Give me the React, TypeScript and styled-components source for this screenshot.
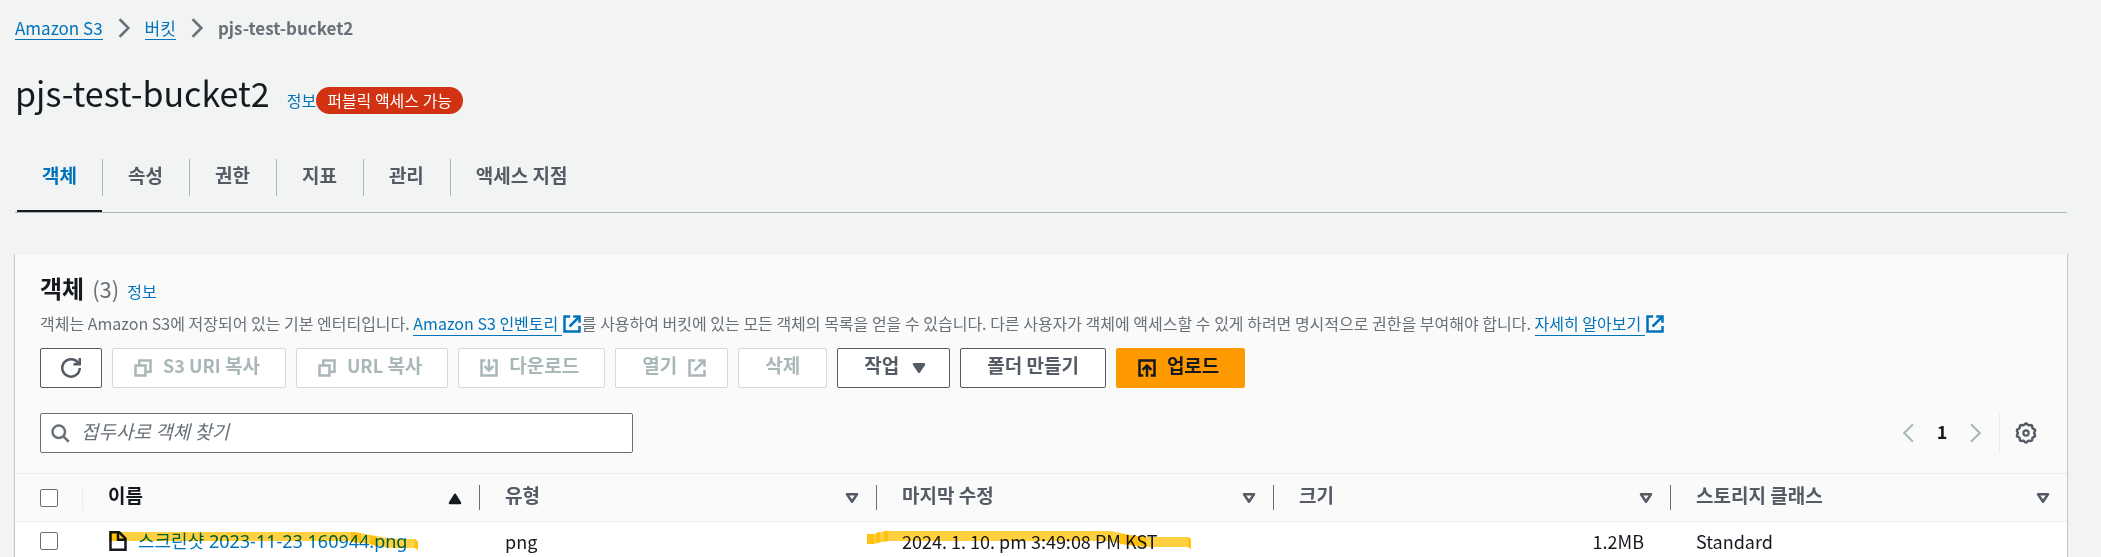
import React from "react";
import styled, { createGlobalStyle, css } from "styled-components";

const color = {
  page: "#f2f3f3",
  panel: "#fafafa",
  white: "#ffffff",
  text: "#16191f",
  label: "#545b64",
  muted: "#687078",
  link: "#0073bb",
  disabled: "#aab7b8",
  disabledBorder: "#d5dbdb",
  rule: "#eaeded",
  danger: "#d13212",
  primary: "#ff9900",
};

const GlobalStyle = createGlobalStyle`
  *, *::before, *::after { box-sizing: border-box; }
  body {
    margin: 0;
    background: ${color.page};
    color: ${color.text};
    font-family: "Noto Sans CJK KR", "Noto Sans", sans-serif;
    font-size: 18px;
    line-height: 26px;
  }
  button, input { font: inherit; color: inherit; }
`;

const Page = styled.main`
  height: 100vh;
  overflow: hidden;
  padding: 16px 34px 0 15px;
`;

/* ---------- links and icons ---------- */

const Link = styled.a<{ $underline?: boolean }>`
  color: ${color.link};
  text-decoration: none;
  ${(p) => p.$underline && css`border-bottom: 1px solid ${color.link};`}
`;

const InfoLink = styled(Link)`
  font-size: 16px;
  font-weight: 400;
`;

const FileLink = styled(Link)`
  font-family: "Noto Sans", "Noto Sans CJK KR", sans-serif;
`;

const Svg = styled.svg<{ $size?: number }>`
  display: block;
  flex: none;
  width: ${(p) => p.$size ?? 20}px;
  height: ${(p) => p.$size ?? 20}px;
  fill: none;
  stroke: currentColor;
  stroke-width: 2;
`;

type IconName =
  | "refresh" | "copy" | "download" | "upload" | "external" | "search"
  | "file" | "gear" | "right" | "pageLeft" | "pageRight"
  | "caretDown" | "sortUp" | "sortNone";

/* Scalloped outline of the settings gear, ten soft teeth round the centre. */
const gearOutline = Array.from({ length: 120 }, (_, i) => {
  const a = (i / 120) * Math.PI * 2;
  const r = 6.4 + 0.5 * Math.cos(10 * a);
  return `${(8 + r * Math.sin(a)).toFixed(2)} ${(8 - r * Math.cos(a)).toFixed(2)}`;
}).join("L");

const shapes: Record<IconName, React.ReactNode> = {
  refresh: (
    <>
      <path d="M10 5h5V0" />
      <path d="M15 8a7 7 0 1 1-1.2-4" />
    </>
  ),
  copy: (
    <>
      <path d="M2 6h8v8H2z" />
      <path d="M5 5.500V2h9v9h-3.500" />
    </>
  ),
  download: (
    <>
      <path d="M5 2H2v12h12V2h-3" />
      <path d="M8 1v9" />
      <path d="M4.500 6.500 8 10l3.500-3.500" />
    </>
  ),
  upload: (
    <>
      <path d="M5 14H2V2h12v12h-3" />
      <path d="M8 15V6.500" />
      <path d="M4.500 9.500 8 6l3.500 3.500" />
    </>
  ),
  external: (
    <>
      <path d="M14 9.500V14H2V2h4.500" />
      <path d="M9 2h5v5" />
      <path d="M6 10l7.500-7.500" />
    </>
  ),
  search: (
    <>
      <circle cx="7" cy="7" r="5" />
      <path d="m10.500 10.500 4.500 4.500" />
    </>
  ),
  file: (
    <>
      <path d="M2 1h7l5 5v9H2z" />
      <path d="M8 1v6h6" />
    </>
  ),
  gear: (
    <>
      <path d={`M${gearOutline}z`} strokeWidth="1.8" />
      <circle cx="8" cy="8" r="1.900" strokeWidth="1.600" />
    </>
  ),
  right: <path d="m4.500 1 7 7-7 7" />,
  pageLeft: <path d="M12 1 5 8l7 7" strokeWidth="1.700" />,
  pageRight: <path d="m4 1 7 7-7 7" strokeWidth="1.700" />,
  caretDown: <path d="M4 5h8l-4 6z" fill="currentColor" strokeLinejoin="round" />,
  sortUp: <path d="M4 12h8L8 5.500z" fill="currentColor" strokeLinejoin="round" />,
  sortNone: <path d="M4 5h8l-4 6z" strokeLinejoin="round" />,
};

function Icon({ name, size }: { name: IconName; size?: number }) {
  return (
    <Svg viewBox="0 0 16 16" $size={size} aria-hidden="true">
      {shapes[name]}
    </Svg>
  );
}

/* ---------- page header ---------- */

const Breadcrumbs = styled.nav`
  display: flex;
  align-items: center;
  gap: 11px;
  height: 24px;
  color: ${color.muted};
  font-size: 17px;
  line-height: 22px;
`;

const Current = styled.span`
  font-weight: 700;
`;

const TitleRow = styled.header`
  display: flex;
  align-items: baseline;
  margin-top: 30px;
`;

const Title = styled.h1`
  margin: 0 17px 0 0;
  font-size: 34px;
  line-height: 46px;
  font-weight: 400;
`;

const Badge = styled.span`
  padding: 0 11px;
  border-radius: 14px;
  background: ${color.danger};
  color: ${color.white};
  font-size: 16px;
  line-height: 27px;
`;

const Tabs = styled.div`
  display: flex;
  margin-top: 36px;
  padding-left: 2px;
  border-bottom: 1px solid ${color.disabled};
`;

const TabLabel = styled.span`
  display: block;
  padding: 3px 25px 8px;
`;

const Tab = styled.button<{ $active?: boolean }>`
  padding: 7px 0 16px;
  border: 0;
  background: none;
  color: ${(p) => (p.$active ? color.link : color.label)};
  font-size: 19px;
  font-weight: 700;
  cursor: pointer;
  ${(p) => p.$active && css`box-shadow: inset 0 -2px ${color.text};`}

  &:not(:first-child) ${TabLabel} {
    padding-right: 26px;
    border-left: 1px solid ${color.disabled};
  }
`;

/* ---------- objects panel ---------- */

const Panel = styled.section`
  margin-top: 40px;
  border-top: 1px solid ${color.rule};
  background: ${color.panel};
  box-shadow:
    0 1px 1px rgba(0, 28, 36, 0.3),
    1px 1px 1px rgba(0, 28, 36, 0.15),
    -1px 1px 1px rgba(0, 28, 36, 0.15);
`;

const PanelHead = styled.div`
  padding: 18px 25px 20px;
`;

const Heading = styled.h2`
  display: flex;
  align-items: baseline;
  gap: 8px;
  margin: 0;
  font-size: 24px;
  line-height: 32px;
  font-weight: 700;
`;

const Count = styled.span`
  color: ${color.muted};
  font-size: 22px;
  font-weight: 400;
`;

const Description = styled.p`
  margin: 3px 0 0;
  color: ${color.muted};
  font-size: 16px;
  line-height: 26px;

  svg {
    display: inline-block;
    vertical-align: -4px;
    color: ${color.link};
  }
`;

const Toolbar = styled.div`
  display: flex;
  flex-wrap: wrap;
  gap: 10px;
  margin-top: 12px;
`;

const buttonPadding = {
  none: "0 26px",
  start: "0 25px 0 20px",
  end: "0 20px 0 26px",
  only: "0 20px",
};

const Button = styled.button<{ $primary?: boolean; $icon?: keyof typeof buttonPadding }>`
  display: flex;
  align-items: center;
  gap: 10px;
  height: 40px;
  padding: ${(p) => buttonPadding[p.$icon ?? "none"]};
  border: 1px solid ${(p) => (p.$primary ? color.primary : color.label)};
  border-radius: 2px;
  background: ${(p) => (p.$primary ? color.primary : color.white)};
  color: ${(p) => (p.$primary ? color.text : color.label)};
  font-size: 19px;
  font-weight: 700;
  white-space: nowrap;
  cursor: pointer;

  &:disabled {
    border-color: ${color.disabledBorder};
    color: ${color.disabled};
    cursor: default;
  }
  & > span {
    padding-bottom: 6px;
  }
`;

const Latin = styled.span`
  font-size: 18px;
`;

const FilterRow = styled.div`
  display: flex;
  justify-content: space-between;
  align-items: center;
  margin-top: 25px;
`;

const SearchBox = styled.label`
  display: flex;
  align-items: center;
  gap: 11px;
  flex: 0 1 593px;
  height: 40px;
  padding: 0 10px 0 9px;
  border: 1px solid ${color.muted};
  border-radius: 2px;
  background: ${color.white};
  color: ${color.muted};
`;

const SearchInput = styled.input`
  flex: 1;
  min-width: 0;
  padding: 0 0 4px;
  border: 0;
  outline: 0;
  background: none;
  font-size: 19px;

  &::placeholder {
    color: ${color.muted};
    font-style: italic;
    opacity: 1;
  }
`;

const Pagination = styled.div`
  display: flex;
  align-items: center;
  height: 40px;
  padding-right: 5px;
`;

const IconButton = styled.button<{ $strong?: boolean }>`
  padding: 0;
  border: 0;
  background: none;
  color: ${(p) => (p.$strong ? color.label : color.disabled)};
  cursor: pointer;
`;

const PageNumber = styled.button`
  width: 48px;
  padding: 0 0 4px;
  border: 0;
  background: none;
  font-weight: 700;
`;

const Separator = styled.span`
  width: 1px;
  height: 100%;
  margin: 0 15px 0 13px;
  background: ${color.rule};
`;

/* ---------- table ---------- */

const Table = styled.table`
  width: 100%;
  table-layout: fixed;
  border-collapse: collapse;
  text-align: left;
`;

const SelectCol = styled.col`
  width: 67px;
`;

const HeadCell = styled.th`
  height: 48px;
  padding: 0;
  border: 1px solid ${color.rule};
  border-width: 1px 0;
  color: ${color.label};
  font-size: 19px;
`;

const HeadInner = styled.div<{ $first?: boolean; $sorted?: boolean }>`
  display: flex;
  align-items: center;
  justify-content: space-between;
  height: 25px;
  padding: 0 14px 0 25px;
  border-left: 1px solid ${(p) => (p.$first ? color.rule : color.muted)};
  ${(p) => p.$sorted && css`color: ${color.text};`}

  & > span {
    padding-bottom: 6px;
  }
`;

const SelectCell = styled.td`
  padding: 0 0 0 25px;
  line-height: 0;
`;

const Checkbox = styled.input`
  appearance: none;
  width: 18px;
  height: 18px;
  margin: 0;
  border: 1px solid ${color.muted};
  border-radius: 2px;
  background: ${color.white};
`;

const Row = styled.tr`
  height: 39px;
  background: ${color.white};
`;

const Cell = styled.td<{ $end?: boolean }>`
  padding: 0 26px;
  white-space: nowrap;
  text-align: ${(p) => (p.$end ? "right" : "left")};
`;

const FileName = styled.span`
  display: flex;
  align-items: center;
  gap: 10px;
`;

const Marked = styled.div`
  position: relative;
`;

const Marker = styled.svg<{ $left: number }>`
  position: absolute;
  top: 0;
  left: ${(p) => p.$left}px;
  mix-blend-mode: multiply;
  pointer-events: none;
`;

const columns: { label: string; icon: IconName }[] = [
  { label: "이름", icon: "sortUp" },
  { label: "유형", icon: "sortNone" },
  { label: "마지막 수정", icon: "sortNone" },
  { label: "크기", icon: "sortNone" },
  { label: "스토리지 클래스", icon: "sortNone" },
];

const tabs = ["객체", "속성", "권한", "지표", "관리", "액세스 지점"];

export default function App() {
  return (
    <>
      <GlobalStyle />
      <Page>
        <Breadcrumbs aria-label="breadcrumb">
          <Link href="#" $underline>Amazon S3</Link>
          <Icon name="right" />
          <Link href="#" $underline>버킷</Link>
          <Icon name="right" />
          <Current>pjs-test-bucket2</Current>
        </Breadcrumbs>

        <TitleRow>
          <Title>pjs-test-bucket2</Title>
          <InfoLink href="#">정보</InfoLink>
          <Badge>퍼블릭 액세스 가능</Badge>
        </TitleRow>

        <Tabs role="tablist">
          {tabs.map((tab, i) => (
            <Tab key={tab} role="tab" aria-selected={i === 0} $active={i === 0}>
              <TabLabel>{tab}</TabLabel>
            </Tab>
          ))}
        </Tabs>

        <Panel>
          <PanelHead>
            <Heading>
              <span>객체</span>
              <Count>(3)</Count>
              <InfoLink href="#">정보</InfoLink>
            </Heading>
            <Description>
              객체는 Amazon S3에 저장되어 있는 기본 엔터티입니다.{" "}
              <Link href="#" $underline>Amazon S3 인벤토리&nbsp;</Link>
              <Icon name="external" />를 사용하여 버킷에 있는 모든 객체의 목록을 얻을 수 있습니다. 다른 사용자가 객체에
              액세스할 수 있게 하려면 명시적으로 권한을 부여해야 합니다.{" "}
              <Link href="#" $underline>자세히 알아보기&nbsp;</Link>
              <Icon name="external" />
            </Description>

            <Toolbar>
              <Button $icon="only" aria-label="새로 고침"><Icon name="refresh" /></Button>
              <Button disabled $icon="start"><Icon name="copy" /><span><Latin>S3 URI</Latin> 복사</span></Button>
              <Button disabled $icon="start"><Icon name="copy" /><span><Latin>URL</Latin> 복사</span></Button>
              <Button disabled $icon="start"><Icon name="download" /><span>다운로드</span></Button>
              <Button disabled $icon="end"><span>열기</span><Icon name="external" /></Button>
              <Button disabled><span>삭제</span></Button>
              <Button $icon="end"><span>작업</span><Icon name="caretDown" /></Button>
              <Button><span>폴더 만들기</span></Button>
              <Button $primary $icon="start"><Icon name="upload" /><span>업로드</span></Button>
            </Toolbar>

            <FilterRow>
              <SearchBox>
                <Icon name="search" />
                <SearchInput type="text" placeholder="접두사로 객체 찾기" aria-label="접두사로 객체 찾기" />
              </SearchBox>
              <Pagination>
                <IconButton aria-label="이전 페이지"><Icon name="pageLeft" /></IconButton>
                <PageNumber>1</PageNumber>
                <IconButton aria-label="다음 페이지"><Icon name="pageRight" /></IconButton>
                <Separator />
                <IconButton $strong aria-label="기본 설정"><Icon name="gear" size={22} /></IconButton>
              </Pagination>
            </FilterRow>
          </PanelHead>

          <Table>
            <colgroup>
              <SelectCol />
            </colgroup>
            <thead>
              <tr>
                <HeadCell>
                  <SelectCell as="div"><Checkbox type="checkbox" aria-label="모두 선택" /></SelectCell>
                </HeadCell>
                {columns.map((c, i) => (
                  <HeadCell key={c.label} scope="col">
                    <HeadInner $first={i === 0} $sorted={i === 0}>
                      <span>{c.label}</span>
                      <Icon name={c.icon} />
                    </HeadInner>
                  </HeadCell>
                ))}
              </tr>
            </thead>
            <tbody>
              <Row>
                <SelectCell><Checkbox type="checkbox" aria-label="스크린샷 2023-11-23 160944.png 선택" /></SelectCell>
                <Cell>
                  <Marked>
                    <FileName>
                      <Icon name="file" />
                      <FileLink href="#">스크린샷 2023-11-23 160944.png</FileLink>
                    </FileName>
                    <Marker $left={0} width="312" height="26" viewBox="0 0 312 26">
                      <path d="M1 4H243C258 5 272 10 290 11H307L310 14V22L307 20H284C266 18 256 14 240 13H1z" fill="#ffd040" />
                      <path d="M1 4h9v9H1zM307 11l3 3v8l-3-2zM243 4l10 1v10l-10-1zM262 7l6 2v9l-6-2z" fill="#ffc010" />
                    </Marker>
                  </Marked>
                </Cell>
                <Cell>png</Cell>
                <Cell>
                  <Marked>
                    2024. 1. 10. pm 3:49:08 PM KST
                    <Marker $left={-36} width="326" height="26" viewBox="0 0 326 26">
                      <path d="M1 6H8L20 3H244C258 5 266 9 284 9H322L325 11V21L322 19H284C266 18 256 15 240 13H20L8 16H1z" fill="#ffd040" />
                      <path d="M1 6h7v10H1zM10 5l4-1v10l-4 1zM18 3h4v10l-4 1zM254 6l26 3v10l-26-3zM322 9l3 2v10l-3-2z" fill="#ffc010" />
                    </Marker>
                  </Marked>
                </Cell>
                <Cell $end>1.2MB</Cell>
                <Cell>Standard</Cell>
              </Row>
            </tbody>
          </Table>
        </Panel>
      </Page>
    </>
  );
}
